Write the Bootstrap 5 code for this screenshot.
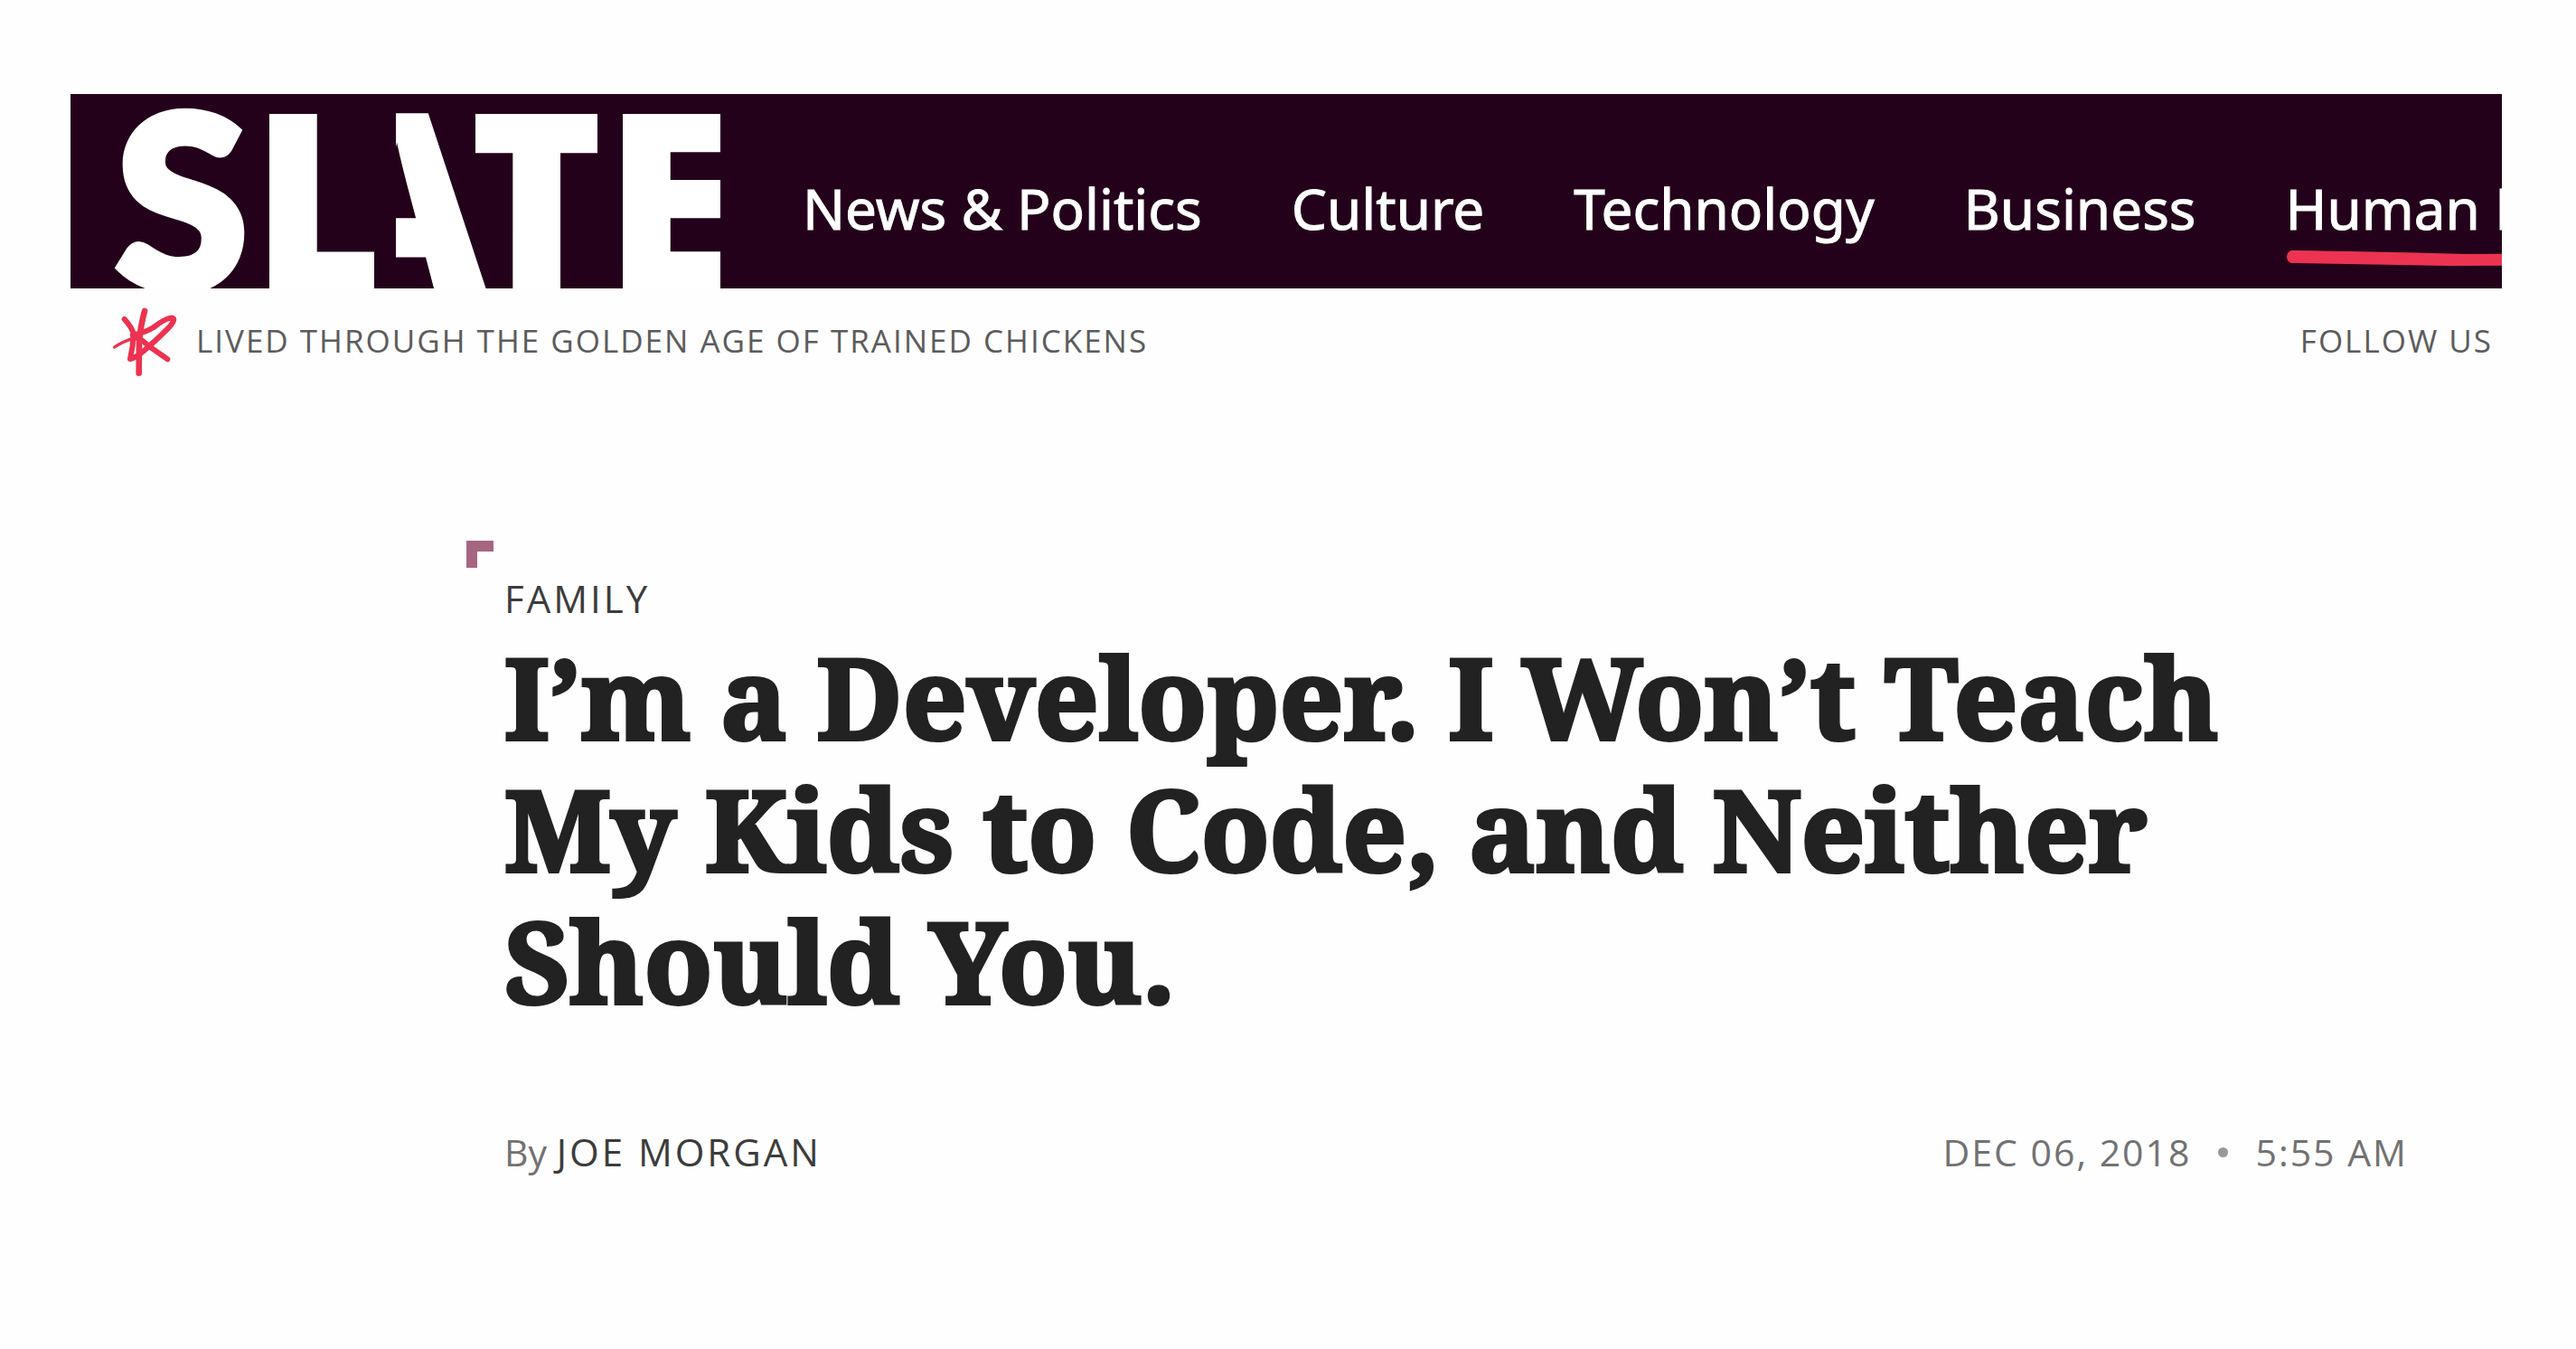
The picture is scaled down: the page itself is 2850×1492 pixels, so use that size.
<!DOCTYPE html>
<html lang="en">
<head>
<meta charset="utf-8">
<meta name="viewport" content="width=device-width, initial-scale=1">
<title>I’m a Developer. I Won’t Teach My Kids to Code, and Neither Should You.</title>
<link href="https://cdn.jsdelivr.net/npm/bootstrap@5.3.0/dist/css/bootstrap.min.css" rel="stylesheet">
<style>
  body { background: #fefefe; font-family: "Open Sans", "Noto Sans", sans-serif; color: #222; }
  a { color: inherit; text-decoration: none; }
  .page { padding: 104px 82px 0 78px; }
  .masthead { background: #24011b; height: 215px; overflow: hidden; }
  .brand { flex: 0 0 810px; }
  .brand svg { display: block; }
  .sections { padding-top: 86px; gap: 99px; }
  .sections a { font-family: "Noto Sans", "Open Sans", sans-serif; font-size: 62px; line-height: 80px; color: #fff; white-space: nowrap; -webkit-text-stroke: 1px #fff; }
  .sections .tail { font-family: "Open Sans", sans-serif; }
  .sections .swash { position: absolute; left: 0; top: 86px; }
  .tagline { padding: 21px 10px 0 47px; font-size: 35px; line-height: 46px; letter-spacing: 2px; color: #5c5c5c; }
  .tagline p, .tagline > a { padding-top: 14px; }
  .tagline .doodle { gap: 20px; }
  .story { margin: 217px 104px 0 480px; }
  .kicker { font-size: 42px; line-height: 56px; letter-spacing: 3px; color: #3c3c3c; }
  .corner { position: absolute; left: -42px; top: -36px; width: 30px; height: 30px; border: solid #a66682; border-width: 12px 0 0 12px; }
  .headline { font-family: "Noto Serif", "DejaVu Serif", serif; font-size: 124px; line-height: 146px; font-weight: 700; color: #222; margin: 7px 0 111px; -webkit-text-stroke: 4px #222; }
  .credits { font-size: 41px; line-height: 56px; color: #727272; }
  .credits .author { font-size: 42px; letter-spacing: 3px; color: #3c3c3c; }
  .credits time { letter-spacing: 2px; }
  .dot { width: 11px; height: 11px; background: #999; margin: 0 30px; }
</style>
<script src="https://cdn.jsdelivr.net/npm/bootstrap@5.3.0/dist/js/bootstrap.bundle.min.js"></script>
</head>
<body>
<div class="page">
  <header class="masthead d-flex align-items-start">
    <a class="brand" href="#" aria-label="Slate home">
      <svg width="740" height="215" viewBox="78 104 740 215" fill="#fff" font-family="Noto Sans, Open Sans, sans-serif" font-weight="900" font-size="273">
        <defs>
          <clipPath id="cut"><path d="M280 104H414V319H280ZM438 104H560V319H438ZM526 104H661V319H526ZM680 104H797V319H680Z"/></clipPath>
          <clipPath id="halfA"><rect x="438" y="104" width="122" height="215"/></clipPath>
          <clipPath id="trimT"><rect x="526" y="104" width="135" height="215"/></clipPath>
        </defs>
        <text x="128" y="319" font-family="Lato, sans-serif" font-size="265" stroke="#fff" stroke-width="10">S</text>
        <g clip-path="url(#cut)">
          <text x="277" y="321">L</text>
          <text x="340" y="321" clip-path="url(#halfA)">A</text>
          <text x="513" y="321" clip-path="url(#trimT)">T</text>
          <text x="668" y="321">E</text>
        </g>
      </svg>
    </a>
    <nav class="sections d-flex flex-nowrap">
      <a href="#">News &amp; Politics</a>
      <a href="#">Culture</a>
      <a href="#">Technology</a>
      <a href="#">Business</a>
      <a href="#" class="position-relative">Human <span class="tail">Interest</span>
        <svg class="swash" width="420" height="20" viewBox="0 0 420 20"><path d="M6 1Q1 3 1 8T6 15L180 18L420 17V4L200 5Q80 2 6 1Z" fill="#ec3351"/></svg>
      </a>
    </nav>
  </header>

  <div class="tagline d-flex justify-content-between align-items-start">
    <div class="doodle d-flex align-items-start">
      <svg width="72" height="77" viewBox="45 60 216 231" fill="none" stroke="#ec3351" stroke-width="18" stroke-linecap="round" stroke-linejoin="round">
        <path d="M83 99Q106 124 113 146Q112 190 102 231Q122 227 152 200Q205 154 235 122Q258 92 236 95Q215 99 180 126Q158 140 125 148"/>
        <path d="M150 72Q136 125 132 172L131 278" stroke-width="20"/>
        <path d="M50 192Q75 174 125 158" stroke-width="10"/>
        <path d="M120 152Q170 195 226 232"/>
        <path d="M104 150L140 146L134 168L110 166Z" fill="#ec3351" stroke-width="6"/>
      </svg>
      <p class="mb-0">LIVED THROUGH THE GOLDEN AGE OF TRAINED CHICKENS</p>
    </div>
    <a href="#">FOLLOW US</a>
  </div>

  <article class="story">
    <div class="kicker position-relative"><span class="corner"></span><a href="#">FAMILY</a></div>
    <h1 class="headline">I’m a Developer. I Won’t Teach<br>My Kids to Code, and Neither<br>Should You.</h1>
    <div class="credits d-flex justify-content-between">
      <div>By <a class="author" href="#">JOE MORGAN</a></div>
      <div class="d-flex align-items-center"><time>DEC 06, 2018</time><span class="dot rounded-circle"></span><time>5:55 AM</time></div>
    </div>
  </article>
</div>
</body>
</html>
